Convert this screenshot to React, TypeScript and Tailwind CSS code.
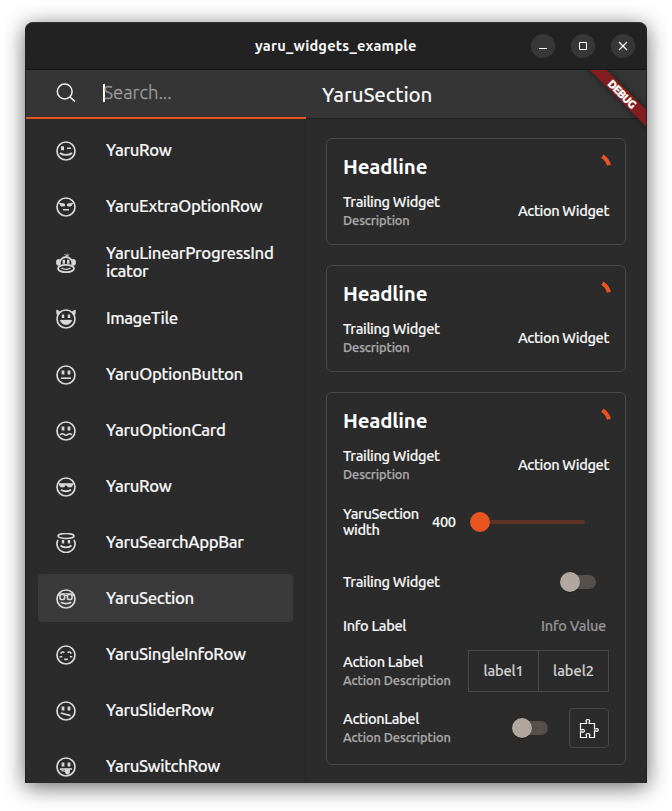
import { useLayoutEffect, useRef, type ReactNode } from "react";

/** Text whose tracking is adjusted so that it spans a given width. */
function Fit({ w, className = "", children }: { w: number; className?: string; children: string }) {
  const ref = useRef<HTMLSpanElement>(null);
  useLayoutEffect(() => {
    const el = ref.current;
    if (!el) return;
    const apply = () => {
      el.style.letterSpacing = "0px";
      const natural = el.offsetWidth;
      el.style.letterSpacing = `${(w - natural) / children.length}px`;
    };
    apply();
    document.fonts?.ready.then(apply);
  }, [w, children]);
  return (
    <span className="flex whitespace-nowrap">
      <span ref={ref} className={`inline-block ${className}`}>
        {children}
      </span>
    </span>
  );
}

function Face({ children, plain = false }: { children: ReactNode; plain?: boolean }) {
  return (
    <svg width="20" height="20" viewBox="0 0 20 20" fill="none" stroke="#d8d8d8" strokeWidth="1.6" className="shrink-0">
      {!plain && <circle cx="10" cy="10" r="9" strokeWidth="1.7" />}
      {children}
    </svg>
  );
}

const eyes = <path d="M7 5.5v4M13 5.5v4" strokeWidth="2.8" />;

const icons: Record<string, ReactNode> = {
  wink: (
    <Face>
      <path d="M6.5 5.2v4" strokeWidth="3" />
      <path d="M11 7.3h4" />
      <path d="M4 12c3 2.600 9 2.600 12 0" strokeWidth="1.800" />
    </Face>
  ),
  angry: (
    <Face>
      <path d="M3.500 6.200l5 .8V9H5zM16.500 6.200l-5 .8V9H15z" fill="#d8d8d8" strokeWidth=".9" />
      <path d="M7 12.800h6" />
    </Face>
  ),
  monkey: (
    <Face plain>
      <path d="M3.800 12a6.400 6.400 0 1 1 12.400 0" strokeWidth="1.800" />
      <path d="M3.500 6.500C1 6 .3 7.500.3 9.500s1 3.200 3.200 2.700zM16.500 6.500c2.500-.5 3.200 1 3.200 3s-1 3.200-3.200 2.700z" fill="#d8d8d8" strokeWidth=".8" />
      <path d="M7.800 6.800v3.900M12.200 6.800v3.900" strokeWidth="2.400" />
      <ellipse cx="10" cy="15.500" rx="8" ry="3.700" strokeWidth="1.800" />
      <path d="M5.500 15c2.500 1.700 6.500 1.700 9 0" strokeWidth="1.500" />
      <path d="M10.500 3L8.500 1M10.500 3l.8-2.500M11 3l2.300-1.500" strokeWidth=".9" />
    </Face>
  ),
  devil: (
    <Face>
      <path d="M.8 1L1 5.500 4 3zM19.200 1L19 5.500 16 3z" fill="#d8d8d8" strokeWidth="1" />
      <path d="M7 5.500v3.500M13 5.500v3.500" strokeWidth="2.400" />
      <path d="M4 11h12c-.8 3-3 4.700-6 4.700S4.800 14 4 11z" fill="#d8d8d8" strokeWidth=".3" />
    </Face>
  ),
  plain: (
    <Face>
      {eyes}
      <path d="M5 13.200h10" />
    </Face>
  ),
  worried: (
    <Face>
      {eyes}
      <path d="M4.200 14c1-1.700 2.500-1.600 3.800-.6 1.200.9 2.800.9 4 0 1.300-1 2.800-1.100 3.800.6" />
    </Face>
  ),
  cool: (
    <Face>
      <path d="M2.500 6.500h15l-2 3.500h-3.500l-1.500-2h-1l-1.500 2H4.500z" fill="#d8d8d8" strokeWidth=".6" />
      <path d="M5 12.800c2.700 1.900 7.300 1.900 10 0" strokeWidth="1.800" />
    </Face>
  ),
  angel: (
    <Face plain>
      <ellipse cx="10" cy="3" rx="8" ry="2.500" strokeWidth="1.600" />
      <path d="M2 6.800a9 8.700 0 1 0 16 0" strokeWidth="1.700" />
      <path d="M7 7v3.500M13 7v3.500" strokeWidth="2.400" />
      <path d="M4.500 12.500c2.900 2.600 8.100 2.600 11 0" strokeWidth="1.800" />
    </Face>
  ),
  nerd: (
    <Face>
      <rect x="4" y="5.500" width="4.600" height="5" rx="1.800" />
      <rect x="11.400" y="5.500" width="4.600" height="5" rx="1.800" />
      <path d="M8.500 6.500h3M1.500 6l2.500 1M18.500 6L16 7M2.800 4.800h14.400" strokeWidth="1.200" />
      <path d="M4.800 13.300c2.900 1.800 7.500 1.800 10.400 0" />
    </Face>
  ),
  blush: (
    <Face>
      <path d="M4.800 8.800c.5-2 2.500-2.300 3.500-1M15.200 8.800c-.5-2-2.500-2.300-3.500-1" />
      <path d="M3.700 11.800h2.500M13.800 11.800h2.500M8.300 13.800c1 .8 2.400.8 3.400 0" />
    </Face>
  ),
  smirk: (
    <Face>
      {eyes}
      <path d="M4.800 12l9.700 2.600" strokeWidth="1.800" />
    </Face>
  ),
  tongue: (
    <Face>
      {eyes}
      <path d="M4 12h12" />
      <path d="M9 12.500h4.500v2.800a2 2 0 0 1-4 0z" fill="#d8d8d8" strokeWidth=".8" />
      <path d="M4.300 12c1 1.500 3 2.300 5.200 2.300" strokeWidth="1.200" />
    </Face>
  ),
};

const items: { icon: string; lines: [string, number][]; selected?: boolean }[] = [
  { icon: "wink", lines: [["YaruRow", 65.5]] },
  { icon: "angry", lines: [["YaruExtraOptionRow", 156.5]] },
  { icon: "monkey", lines: [["YaruLinearProgressInd", 167.5], ["icator", 42]] },
  { icon: "devil", lines: [["ImageTile", 72]] },
  { icon: "plain", lines: [["YaruOptionButton", 136.7]] },
  { icon: "worried", lines: [["YaruOptionCard", 119.5]] },
  { icon: "cool", lines: [["YaruRow", 65.5]] },
  { icon: "angel", lines: [["YaruSearchAppBar", 138]] },
  { icon: "nerd", lines: [["YaruSection", 88]], selected: true },
  { icon: "blush", lines: [["YaruSingleInfoRow", 140]] },
  { icon: "smirk", lines: [["YaruSliderRow", 107.5]] },
  { icon: "tongue", lines: [["YaruSwitchRow", 114]] },
];

function WindowButton({ children }: { children: ReactNode }) {
  return (
    <button className="flex size-6 items-center justify-center rounded-full bg-[#373737]">
      <svg width="10" height="10" viewBox="0 0 10 10" fill="none" stroke="#fff">
        {children}
      </svg>
    </button>
  );
}

function Label({ title, w, sub, subW = 0 }: { title: string; w: number; sub?: string; subW?: number }) {
  return (
    <div className="flex flex-col pb-px">
      <Fit w={w} className="text-[14.6px] leading-[19px] font-medium [-webkit-text-stroke:0.15px]">{title}</Fit>
      {sub && (
        <Fit w={subW} className="text-[12.8px] leading-[18px] font-medium text-[#a9a9a9] [-webkit-text-stroke:0.25px]">
          {sub}
        </Fit>
      )}
    </div>
  );
}

function Row({ className, children }: { className: string; children: ReactNode }) {
  return <div className={`flex items-center justify-between ${className}`}>{children}</div>;
}

function Switch() {
  return (
    <div className="flex h-5 w-9 items-center">
      <div className="z-10 size-5 shrink-0 rounded-full bg-[#b0a8a0] shadow-[0_1px_1px_rgba(0,0,0,0.3)]" />
      <div className="-ml-4 h-3.5 w-8 rounded-full bg-[#55504c]" />
    </div>
  );
}

function Section({ className, children }: { className: string; children?: ReactNode }) {
  return (
    <section className={`rounded-md border border-[#484848] px-4 pt-3 ${className}`}>
      <Row className="h-8">
        <Fit w={84.5} className="text-[20.5px] leading-8 font-semibold text-white">Headline</Fit>
        <svg width="24" height="24" viewBox="0 0 24 24" fill="none" className="-mr-[7px] overflow-visible">
          <path d="M10.4 1.2A15 15 0 0 1 16.9 10.2" stroke="#e95420" strokeWidth="4" />
        </svg>
      </Row>
      <Row className="h-14">
        <Label title="Trailing Widget" w={96.5} sub="Description" subW={67} />
        <Fit w={91} className="text-[14.6px] leading-5 font-medium [-webkit-text-stroke:0.15px]">Action Widget</Fit>
      </Row>
      {children}
    </section>
  );
}

export default function App() {
  return (
    <div className="h-[811px] w-[672px] bg-white px-[25px] pt-[22px] font-['Ubuntu','Noto_Sans',sans-serif] text-[#f6f6f6]">
      <div className="flex h-[761px] w-[622px] flex-col overflow-hidden rounded-t-lg border-x border-t border-[#222] border-t-[#333] bg-[#2b2b2b] shadow-[0_4px_22px_rgba(0,0,0,0.6)]">
        <header className="flex h-[47px] shrink-0 items-center justify-between border-b border-[#191919] bg-[#222] pr-[11px] pl-[229px]">
          <Fit w={161.5} className="text-[14.6px] leading-5 font-bold">yaru_widgets_example</Fit>
          <div className="flex gap-4">
            <WindowButton>
              <path d="M1 7.5h8" />
            </WindowButton>
            <WindowButton>
              <path d="M1.5 1.5h7v7h-7z" />
            </WindowButton>
            <WindowButton>
              <path d="M1 1l8 8M9 1L1 9" strokeWidth="1.3" />
            </WindowButton>
          </div>
        </header>
        <div className="relative flex min-h-0 flex-1 overflow-hidden">
          <aside className="flex w-[280px] shrink-0 flex-col">
            <div className="flex h-[49px] shrink-0 items-center border-b-2 border-[#e95420] bg-[#353535] pb-px pl-[30px]">
              <svg width="20" height="20" viewBox="0 0 20 20" fill="none" stroke="#f2f2f2" strokeWidth="1.5">
                <circle cx="8.7" cy="8.5" r="7.4" />
                <path d="M14 14l5 4.6" />
              </svg>
              <div className="ml-[27px] h-[18px] w-0.5 bg-white" />
              <Fit w={68} className="-ml-[1.5px] pb-0.5 text-[18.5px] leading-6 font-light text-[#9c9c9c] [-webkit-text-stroke:0.3px]">
                Search...
              </Fit>
            </div>
            <nav className="flex min-h-0 flex-1 flex-col gap-2 overflow-hidden border-r border-[#262626] pt-[7px] pr-3 pl-3">
              {items.map((it, i) => (
                <div
                  key={i}
                  className={`flex h-12 shrink-0 items-center gap-[30px] rounded pl-[18px] ${it.selected ? "bg-[#3a3a3a]" : ""}`}
                >
                  <span className="mt-0.5">{icons[it.icon]}</span>
                  <div>
                    {it.lines.map(([text, w]) => (
                      <Fit key={text} w={w} className="text-[16.8px] leading-[18px] font-medium [-webkit-text-stroke:0.15px]">
                        {text}
                      </Fit>
                    ))}
                  </div>
                </div>
              ))}
            </nav>
          </aside>
          <main className="flex flex-1 flex-col">
            <div className="flex h-[49px] shrink-0 items-center border-b border-[#212121] bg-[#353535] pt-0.5 pl-4">
              <Fit w={110} className="text-[20.5px] leading-7 font-medium">YaruSection</Fit>
            </div>
            <div className="flex flex-col gap-5 px-5 pt-[19px]">
              <Section className="h-[107px]" />
              <Section className="h-[107px]" />
              <Section className="h-[373px]">
                <Row className="h-[58px]">
                  <div className="w-[89px] shrink-0">
                    <Fit w={76} className="text-[14.6px] leading-4 font-medium [-webkit-text-stroke:0.15px]">YaruSection</Fit>
                    <Fit w={36.5} className="text-[14.6px] leading-4 font-medium [-webkit-text-stroke:0.15px]">width</Fit>
                  </div>
                  <div className="flex-1">
                    <Fit w={24} className="text-[14.6px] leading-5 font-medium [-webkit-text-stroke:0.15px]">400</Fit>
                  </div>
                  <div className="mr-6 flex w-[115px] items-center">
                    <div className="size-5 shrink-0 rounded-full bg-[#e95420]" />
                    <div className="h-1 flex-1 rounded-r-full bg-[#5c3427]" />
                  </div>
                </Row>
                <Row className="h-[62px] pr-[13px]">
                  <Label title="Trailing Widget" w={96.5} />
                  <Switch />
                </Row>
                <Row className="h-[26px] pr-[3px]">
                  <Label title="Info Label" w={63.5} />
                  <Fit w={65} className="text-[14.6px] leading-5 font-medium text-[#959595] [-webkit-text-stroke:0.15px]">Info Value</Fit>
                </Row>
                <Row className="h-16">
                  <Label title="Action Label" w={79.5} sub="Action Description" subW={108} />
                  <div className="flex h-[42px] w-[141px] divide-x divide-[#484848] border border-[#484848] text-[#d2d2d2]">
                    <div className="flex flex-1 items-center justify-center">
                      <Fit w={40} className="text-[14.6px] leading-5 font-medium [-webkit-text-stroke:0.15px]">label1</Fit>
                    </div>
                    <div className="flex flex-1 items-center justify-center">
                      <Fit w={41} className="text-[14.6px] leading-5 font-medium [-webkit-text-stroke:0.15px]">label2</Fit>
                    </div>
                  </div>
                </Row>
                <Row className="h-[50px]">
                  <Label title="ActionLabel" w={76} sub="Action Description" subW={108} />
                  <div className="flex items-center gap-[21px]">
                    <Switch />
                    <button className="flex size-10 items-center justify-center rounded border border-[#484848]">
                      <svg width="20" height="20" viewBox="0 0 20 20" fill="none" stroke="#fff" strokeWidth="1.2">
                        <path d="M1.5 5.5H7.5V4C6.7 3.4 6.8 1.5 8.8 1.5s2.3 1.9 1.3 2.600v1.400H15.500v5.500h1.400c.7-.8 2.300-.5 2.300.9s-1.500 1.800-2.300.9h-1.400v6.700H10.500v-1.800c.8-.8.300-2.200-1.500-2.200s-2.300 1.400-1.500 2.200v1.800H1.500v-5.700H3c.8.900 2.400.4 2.400-1s-1.600-1.800-2.400-.9H1.500z" />
                      </svg>
                    </button>
                  </div>
                </Row>
              </Section>
            </div>
          </main>
          <div className="pointer-events-none absolute top-0 right-0 size-16 overflow-hidden">
            <div className="absolute top-[18px] -left-[26px] flex h-3 w-[132px] rotate-45 items-center justify-center bg-[#821e20] shadow-[0_0_6px_rgba(0,0,0,0.5)]">
              <Fit w={35} className="text-[11px] leading-3 font-black text-white [-webkit-text-stroke:0.3px]">DEBUG</Fit>
            </div>
          </div>
        </div>
      </div>
    </div>
  );
}
